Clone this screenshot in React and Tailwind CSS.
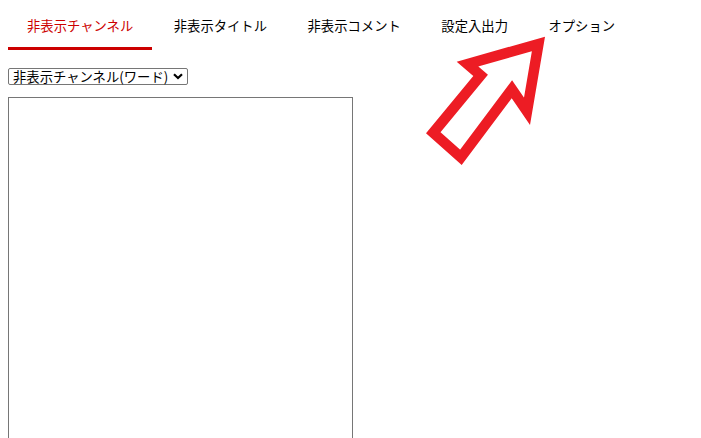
import React from "react";

const tabs = ["非表示チャンネル", "非表示タイトル", "非表示コメント", "設定入出力", "オプション"];

const ARROW = "M545 36.7 L456.7 61.7 L473.3 76 L426 133.3 L461.7 165 L511.7 98.3 L530 125 Z";

export default function App() {
  return (
    <div
      className="relative w-[701px] h-[438px] overflow-hidden bg-white text-black"
      style={{ fontFamily: '"Noto Sans CJK JP", "Noto Sans", sans-serif' }}
    >
      <nav className="flex gap-[2.5px] pl-2">
        {tabs.map((t, i) => (
          <div
            key={t}
            className={
              "px-[19px] pt-[16px] pb-[11px] text-[13.33px] leading-[20px] border-b-[3px] " +
              (i === 0 ? "border-[#cc0000] text-[#cc0000]" : "border-transparent text-black")
            }
          >
            {t}
          </div>
        ))}
      </nav>
      <div className="pl-2 pt-[18px]">
        <div className="flex items-center w-[180px] h-[17px] border border-[#767676] rounded-[2px] pl-[4px] pr-[4px] text-[13.33px] leading-[15px]">
          <span className="flex-1 whitespace-nowrap">非表示チャンネル(ワード)</span>
          <svg width="10" height="7" viewBox="0 0 10 7" className="shrink-0">
            <path d="M1 1.2 L5 5 L9 1.2" fill="none" stroke="#000" strokeWidth="2.2" />
          </svg>
        </div>
        <div className="mt-[12px] w-[345px] h-[400px] border border-[#767676]" />
      </div>
      <svg
        className="absolute left-0 top-0 pointer-events-none"
        width="701"
        height="438"
        viewBox="0 0 701 438"
      >
        <defs>
          <clipPath id="arrowClip">
            <path d={ARROW} />
          </clipPath>
        </defs>
        <path
          d={ARROW}
          fill="none"
          stroke="#ed1c24"
          strokeWidth="21"
          strokeLinejoin="miter"
          strokeMiterlimit="20"
          clipPath="url(#arrowClip)"
        />
      </svg>
    </div>
  );
}
